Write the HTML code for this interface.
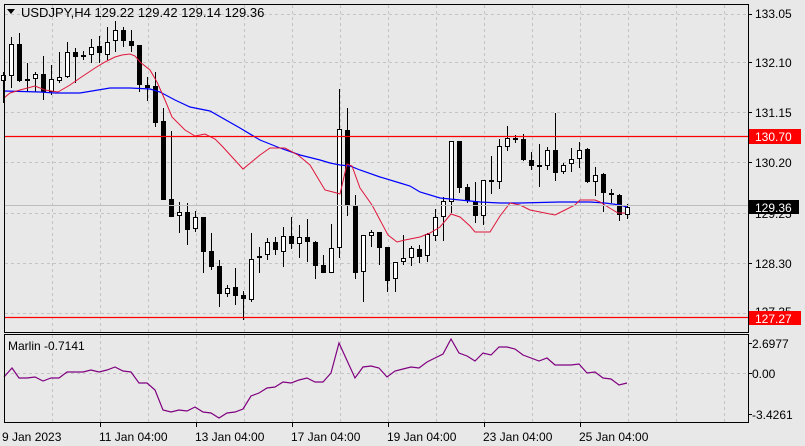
<!DOCTYPE html>
<html><head><meta charset="utf-8">
<style>
html,body{margin:0;padding:0;background:#e8e8e8;}
svg{display:block;}
text{font-family:"Liberation Sans",sans-serif;font-size:12px;fill:#000;}
</style></head>
<body>
<svg id="s" width="805" height="446" viewBox="0 0 805 446" xmlns="http://www.w3.org/2000/svg">
<rect width="805" height="446" fill="#e8e8e8"/>
<g id="grid" stroke="#c4c4c4" stroke-dasharray="3,3" stroke-width="1"></g>
<g id="cand"></g>
<polyline fill="none" stroke="#0000ff" stroke-width="1.2" points="4,91 40,92 55,93 80,93 110,88 130,88 150,89 160,92 175,100 190,107 210,111 240,128 260,140 280,148 300,155 320,160 330,163 340,165 350,166 360,170 380,177 400,183 410,186 420,192 440,198 460,200 480,202 500,203 520,203 560,202 590,202 605,203 620,205 627,207"/>
<polyline fill="none" stroke="#e0153a" stroke-width="1" points="4,98 10,93 20,90 35,86 45,90 58,92 70,85 80,78 95,68 105,62 115,57 122,55 130,54 135,56 140,62 150,70 157,82 165,100 172,117 185,130 195,136 205,134 215,139 222,146 243,169 260,155 270,148 285,148 298,155 310,165 325,190 333,192 340,194 347,164 352,166 360,188 372,205 380,220 388,235 397,242 405,240 420,237 430,233 440,227 451,214 460,217 470,226 475,232 490,232 500,216 510,203 520,205 530,210 540,212 555,215 565,210 575,205 580,200 595,200 600,202 608,207 618,213 625,213"/>
<line x1="4" y1="136.5" x2="748" y2="136.5" stroke="#ff0000" stroke-width="1.3"/>
<line x1="4" y1="317.5" x2="748" y2="317.5" stroke="#ff0000" stroke-width="1.3"/>
<line x1="4" y1="205.5" x2="748" y2="205.5" stroke="#bdbdbd" stroke-width="1"/>
<polyline fill="none" stroke="#800080" stroke-width="1.2" points="4,377 12,368 19,378 27,378 35,377 43,381 51,378 59,378 67,372 75,372 83,372 91,370 99,372 107,370 115,367 123,371 131,372 139,383 147,383 155,390 163,410 171,412 179,410 187,411 195,407 203,412 211,413 219,418 227,413 235,412 243,409 251,396 259,393 267,388 275,387 283,382 291,383 299,380 307,378 315,382 323,382 331,373 339,343 355,378 363,367 371,366 379,368 387,377 395,371 403,369 411,367 419,368 427,362 435,358 443,354 451,339 459,353 467,356 475,361 483,353 491,355 499,347 507,347 515,349 523,355 531,358 539,361 547,358 555,365 563,365 571,365 579,364 587,373 595,372 603,378 611,379 619,385 627,383"/>
<rect x="4.5" y="4.5" width="744" height="328" fill="none" stroke="#000"/>
<rect x="4.5" y="334.5" width="744" height="88" fill="none" stroke="#000"/>
<g stroke="#000"><line x1="749" y1="14.5" x2="752" y2="14.5"/><line x1="749" y1="62.5" x2="752" y2="62.5"/><line x1="749" y1="112.5" x2="752" y2="112.5"/><line x1="749" y1="162.5" x2="752" y2="162.5"/><line x1="749" y1="263.5" x2="752" y2="263.5"/><line x1="749" y1="343.5" x2="752" y2="343.5"/><line x1="749" y1="373.5" x2="752" y2="373.5"/><line x1="749" y1="414.5" x2="752" y2="414.5"/></g>
<text x="755" y="18">133.05</text>
<text x="755" y="67">132.10</text>
<text x="755" y="117">131.15</text>
<text x="755" y="167">130.20</text>
<text x="755" y="218">129.25</text>
<text x="755" y="268">128.30</text>
<text x="755" y="316">127.35</text>
<rect x="749" y="200" width="50" height="14" fill="#000"/>
<text x="755" y="212" style="fill:#fff">129.36</text>
<rect x="749" y="129" width="52" height="15" fill="#ff0000"/>
<text x="755" y="141" style="fill:#fff">130.70</text>
<rect x="749" y="311" width="52" height="14" fill="#ff0000"/>
<text x="755" y="323" style="fill:#fff">127.27</text>
<text x="752" y="348">2.6977</text>
<text x="752" y="378">0.00</text>
<text x="752" y="419">-3.4261</text>
<path d="M7,9 L15,9 L11,14 Z" fill="#000"/>
<text x="21" y="17" style="font-size:13px">USDJPY,H4  129.22 129.42 129.14 129.36</text>
<text x="8" y="350">Marlin -0.7141</text>
<g stroke="#000"><line x1="100.5" y1="423" x2="100.5" y2="427"/><line x1="196.5" y1="423" x2="196.5" y2="427"/><line x1="292.5" y1="423" x2="292.5" y2="427"/><line x1="388.5" y1="423" x2="388.5" y2="427"/><line x1="484.5" y1="423" x2="484.5" y2="427"/><line x1="580.5" y1="423" x2="580.5" y2="427"/></g>
<text x="2" y="441">9 Jan 2023</text>
<text x="99" y="441">11 Jan 04:00</text>
<text x="195" y="441">13 Jan 04:00</text>
<text x="291" y="441">17 Jan 04:00</text>
<text x="387" y="441">19 Jan 04:00</text>
<text x="483" y="441">23 Jan 04:00</text>
<text x="579" y="441">25 Jan 04:00</text>
</svg>
<script>
var g=document.getElementById("grid"),h="";
for(var x=52;x<748;x+=48){h+='<line x1="'+(x+.5)+'" y1="5" x2="'+(x+.5)+'" y2="332"/><line x1="'+(x+.5)+'" y1="335" x2="'+(x+.5)+'" y2="422"/>';}
[14,62,112,162,213,263,313].forEach(function(y){h+='<line x1="5" y1="'+(y+.5)+'" x2="748" y2="'+(y+.5)+'"/>';});
h+='<line x1="5" y1="373.5" x2="748" y2="373.5"/>';
g.innerHTML=h;
var d="W75,81,72,103 W44,76,37,88 B44,81,33,82 B79,81,63,92 W74,79,72,92 B74,92,56,100 W79,92,65,95 W77,81,52,83 W52,77,42,78 B52,57,48,83 B55,55,51,60 W47,55,39,63 B46,53,36,63 W42,55,27,60 W30,41,21,52 B30,41,27,47 B41,46,30,52 B45,85,45,92 B85,88,77,101 B86,123,72,127 B121,200,108,200 B199,217,131,217 W212,216,202,233 B212,230,203,245 W217,229,211,232 B217,252,217,273 B251,267,233,270 B266,294,260,307 W288,294,285,297 B287,296,268,305 B295,299,291,320 W259,300,233,302 W256,258,247,273 W242,255,238,260 B242,250,237,255 W236,252,227,267 B236,244,217,249 W237,244,225,258 B237,242,219,262 B242,266,241,279 B265,273,255,273 W248,273,224,273 W129,248,89,258 B130,206,108,216 B205,273,195,279 W235,272,235,302 W232,236,230,247 B232,248,232,265 B247,281,247,292 W262,279,262,292 W258,262,235,265 W248,258,246,266 B249,257,245,263 W234,256,233,262 W217,236,209,241 W201,217,197,241 W141,202,141,213 B141,188,141,193 B187,201,184,203 B201,216,182,223 W180,216,180,225 W180,182,156,194 W146,182,139,189 W138,147,126,151 B138,140,135,143 B139,160,134,161 B160,166,152,170 B165,167,144,187 W150,166,147,170 B150,173,113,181 W165,172,163,174 W159,164,148,172 W150,159,142,168 B149,182,148,183 W175,182,167,196 B174,193,173,212 B193,195,189,203 B195,215,194,221 W207,215,204,219".split(" ");
var c="";
d.forEach(function(s,i){var t=s[0],v=s.slice(1).split(",").map(Number);var cx=8*i+3.5;
c+='<line x1="'+cx+'" y1="'+v[2]+'" x2="'+cx+'" y2="'+v[3]+'" stroke="#000"/>';
if(t=="W"){c+='<rect x="'+(cx-2)+'" y="'+(v[0]+.5)+'" width="4" height="'+Math.max(v[1]-v[0]-1,1)+'" fill="#fff" stroke="#000"/>';}
else{c+='<rect x="'+(cx-2.5)+'" y="'+v[0]+'" width="5" height="'+Math.max(v[1]-v[0],2)+'" fill="#000"/>';}
});
document.getElementById("cand").innerHTML=c;
</script>
</body></html>
